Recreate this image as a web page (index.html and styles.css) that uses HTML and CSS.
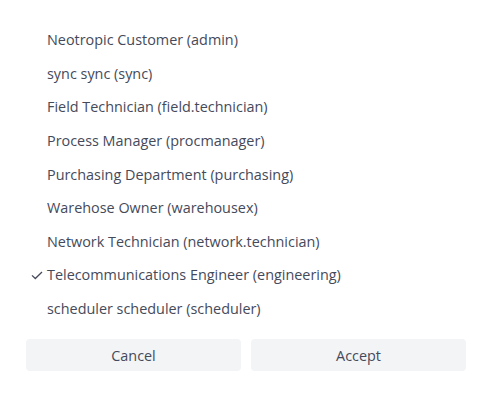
FILE: index.html
```html
<!DOCTYPE html>
<html lang="en">
<head>
    <meta charset="UTF-8">
    <meta name="viewport" content="width=device-width, initial-scale=1.0">
    <title>Select User</title>
    <link rel="stylesheet" href="styles.css">
</head>
<body>
    <div class="dialog">
        <ul class="user-list">
            <li class="user-item"><span class="check"></span>Neotropic Customer (admin)</li>
            <li class="user-item"><span class="check"></span>sync sync (sync)</li>
            <li class="user-item"><span class="check"></span>Field Technician (field.technician)</li>
            <li class="user-item"><span class="check"></span>Process Manager (procmanager)</li>
            <li class="user-item"><span class="check"></span>Purchasing Department (purchasing)</li>
            <li class="user-item"><span class="check"></span>Warehose Owner (warehousex)</li>
            <li class="user-item"><span class="check"></span>Network Technician (network.technician)</li>
            <li class="user-item selected">
                <span class="check">
                    <svg width="12" height="10" viewBox="0 0 12 10">
                        <path d="M1 5.4 L4.3 8.5 L11 2" fill="none" stroke="#454a5a" stroke-width="1.3"/>
                    </svg>
                </span>Telecommunications Engineer (engineering)</li>
            <li class="user-item"><span class="check"></span>scheduler scheduler (scheduler)</li>
        </ul>

        <div class="actions">
            <button class="action-btn">Cancel</button>
            <button class="action-btn">Accept</button>
        </div>
    </div>
</body>
</html>
```

FILE: styles.css
```css
body {
    margin: 0;
    background: #ffffff;
    font-family: 'Open Sans', 'Liberation Sans', sans-serif;
    color: #454a5a;
}

.dialog {
    padding: 23px 20px 0 26px;
}

.user-list {
    list-style-type: none;
    margin: 0;
    padding: 0;
}

.user-item {
    display: flex;
    align-items: center;
    height: 33.6px;
    font-size: 14.4px;
}

.check {
    width: 21px;
    display: flex;
    justify-content: flex-end;
    padding-right: 4px;
    margin-left: -4px;
}

.check svg {
    display: block;
}

.actions {
    display: flex;
    gap: 10px;
    margin-top: 14px;
}

.action-btn {
    flex: 1;
    height: 32px;
    background-color: #f3f4f6;
    border: none;
    border-radius: 4px;
    font-family: inherit;
    font-size: 14.4px;
    color: #454a5a;
    cursor: pointer;
}

.action-btn:hover {
    background-color: #e8eaee;
}
```
